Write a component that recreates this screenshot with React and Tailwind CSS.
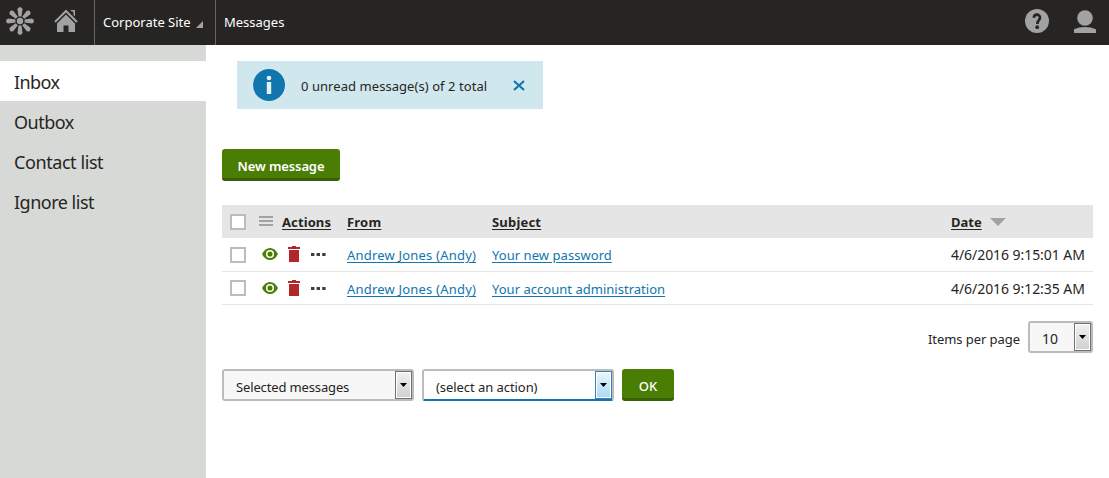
import React from "react";

const messages = [
  { from: "Andrew Jones (Andy)", subject: "Your new password", date: "4/6/2016 9:15:01 AM", height: "h-[34px]", boxPad: "pt-[9px]", spacing: "tracking-[0.05px]" },
  { from: "Andrew Jones (Andy)", subject: "Your account administration", date: "4/6/2016 9:12:35 AM", height: "h-[33px]", boxPad: "pt-[8px]", spacing: "tracking-[0.02px]" },
];

const folders = [
  { name: "Inbox", spacing: "tracking-[-0.6px]" },
  { name: "Outbox", spacing: "tracking-[-0.5px]" },
  { name: "Contact list", spacing: "tracking-[-0.42px]" },
  { name: "Ignore list", spacing: "tracking-[-0.5px]" },
];

function Logo() {
  return (
    <svg width="28" height="28" viewBox="-14 -14 28 28" fill="#a3a2a2">
      {[0, 45, 90, 135, 180, 225, 270, 315].map((a) => (
        <path key={a} transform={`rotate(${a})`} d="M-1.5-4.6L-2.5-11.8Q-2.5-13.3 0-14Q2.5-13.3 2.5-11.8L1.5-4.6Z" />
      ))}
      <circle r="3.2" />
    </svg>
  );
}

function Home() {
  return (
    <svg width="24" height="24" viewBox="0 0 24 24" fill="#a3a2a2">
      <path d="M12 5.6L21 14.5V23H14.5V16.5H9.5V23H3V14.5Z" />
      <path d="M1 13L12 2L23 13" fill="none" stroke="#a3a2a2" strokeWidth="2.1" />
      <path d="M16.2 1H21V7.5L19.4 6V2.6H17.8Z" />
    </svg>
  );
}

function Checkbox() {
  return <span className="block size-4 border-2 border-[#bdbbbb] bg-white" />;
}

function Eye() {
  return (
    <svg width="16" height="12" viewBox="0 0 16 12">
      <path d="M0 6C2 2 4.8 0 8 0S14 2 16 6C14 10 11.2 12 8 12S2 10 0 6Z" fill="#497d04" />
      <circle cx="8" cy="6" r="3.3" fill="none" stroke="#fff" strokeWidth="1.5" />
    </svg>
  );
}

function Trash() {
  return (
    <svg width="12" height="16" viewBox="0 0 12 16" fill="#b12628">
      <path d="M0 1H4V0H8V1H12V3H0ZM1 4H11V16H1Z" />
    </svg>
  );
}

function More() {
  return (
    <svg width="15" height="3" viewBox="0 0 15 3" fill="#403e3d">
      <path d="M0 0H3.4V3H0ZM5.6 0H9V3H5.6ZM11.2 0H14.6V3H11.2Z" />
    </svg>
  );
}

function Select({ label, width, active = false }) {
  return (
    <div
      className={`flex h-8 justify-between rounded-[3px] border-2 ${width} ${
        active ? "border-[#bdbbbb] border-b-[#1175ae] bg-white" : "border-[#bdbbbb] bg-[#f7f7f7]"
      }`}
    >
      <span className="pt-[6px] pl-3 leading-5">{label}</span>
      <span
        className={`flex w-[17px] items-center justify-center border shadow-[inset_0_0_0_1px_white] ${
          active ? "border-[#3c7fb1] bg-linear-to-b from-[#eaf6fd] to-[#a7d9f5]" : "border-[#707070] bg-linear-to-b from-[#f2f2f2] to-[#cfcfcf]"
        }`}
      >
        <svg width="7" height="4" viewBox="0 0 7 4"><path d="M0 0H7L3.5 4Z" /></svg>
      </span>
    </div>
  );
}

export default function App() {
  return (
    <div className="flex h-[478px] w-[1109px] flex-col overflow-hidden bg-white font-['Noto_Sans',sans-serif] text-[13px] text-[#262524]">
      <header className="flex h-[45px] shrink-0 bg-[#262524] text-white">
        <div className="flex w-[95px] border-r border-[#696663] pt-[7px]">
          <span className="ml-[6px]"><Logo /></span>
          <span className="ml-[20px] pt-[2px]"><Home /></span>
        </div>
        <div className="flex w-[121px] border-r border-[#696663] pt-3 pl-2 leading-5">
          <span className="whitespace-nowrap">Corporate Site</span>
          <svg className="mt-[9px] ml-[5px]" width="7" height="7" viewBox="0 0 7 7" fill="#a3a2a2"><path d="M7 0V7H0Z" /></svg>
        </div>
        <div className="pt-3 pl-2 leading-5">Messages</div>
        <div className="ml-auto flex pt-[9px] pr-[13px]">
          <svg width="24" height="24" viewBox="0 0 24 24">
            <circle cx="12" cy="12" r="12" fill="#a3a2a2" />
            <path d="M8.9 8.8C8.9 4.7 15 4.7 15 8.6C15 11.2 12.4 11.3 12.4 15" fill="none" stroke="#262524" strokeWidth="2.7" />
            <circle cx="12.2" cy="18.2" r="1.9" fill="#262524" />
          </svg>
          <svg className="ml-[25px]" width="22" height="24" viewBox="0 0 22 24" fill="#a3a2a2">
            <circle cx="11" cy="9" r="7.8" />
            <path d="M0 24V20.2Q5 18 11 18T22 20.2V24Z" />
          </svg>
        </div>
      </header>
      <div className="flex grow">
        <nav className="w-[206px] shrink-0 bg-[#d6d9d6] pt-4 text-[18px]">
          {folders.map((folder, i) => (
            <div key={folder.name} className={`h-10 pt-[9px] pl-[14px] leading-6 ${folder.spacing} ${i === 0 ? "bg-white" : ""}`}>{folder.name}</div>
          ))}
        </nav>
        <main className="flex grow flex-col pt-4 pr-4 pl-4">
          <div className="ml-[15px] flex h-12 w-[306px] bg-[#d0e7ed] pl-4">
            <svg className="mt-2" width="32" height="32" viewBox="0 0 32 32">
              <circle cx="16" cy="16" r="16" fill="#1175ae" />
              <circle cx="16" cy="9" r="2.3" fill="#e7f1f4" />
              <path d="M13.8 13H18.2V25H13.8Z" fill="#e7f1f4" />
            </svg>
            <span className="w-[228px] pt-[15px] pl-4 leading-5 tracking-[0.06px]">0 unread message(s) of 2 total</span>
            <svg className="mt-[19px]" width="12" height="11" viewBox="0 0 12 11"><path d="M1 1L11 10M11 1L1 10" stroke="#1175ae" strokeWidth="2.2" /></svg>
          </div>
          <button className="mt-10 flex h-8 w-[118px] justify-center rounded-[3px] border-b-[3px] border-[#375f04] bg-[#497d04] pt-[7px] leading-5 font-semibold tracking-[-0.12px] text-white">New message</button>
          <div className="mt-6 flex h-[33px] bg-[#e5e5e5] leading-5 font-bold">
            <div className="w-[37px] pt-[9px] pl-2"><Checkbox /></div>
            <svg className="mt-[11px]" width="14" height="10" viewBox="0 0 14 10" fill="#a3a2a2"><path d="M0 0H14V2H0ZM0 4H14V6H0ZM0 8H14V10H0Z" /></svg>
            <span className="w-[74px] pt-[7px] pl-[9px] tracking-[0.1px] underline underline-offset-2">Actions</span>
            <span className="w-[145px] pt-[7px] tracking-[0.2px] underline underline-offset-2">From</span>
            <span className="w-[459px] pt-[7px] tracking-[0.2px] underline underline-offset-2">Subject</span>
            <span className="pt-[7px] underline underline-offset-2">Date</span>
            <svg className="mt-[13px] ml-[8px]" width="16" height="8" viewBox="0 0 16 8" fill="#a3a2a2"><path d="M0 0H16L8 8Z" /></svg>
          </div>
          {messages.map((m) => (
            <div key={m.subject} className={`flex border-b border-[#e5e5e5] ${m.height} leading-5`}>
              <div className={`w-10 pl-2 ${m.boxPad}`}><Checkbox /></div>
              <div className="flex w-[85px] pt-[8px]">
                <span className="mt-[2px]"><Eye /></span>
                <span className="ml-[10px]"><Trash /></span>
                <span className="mt-[7px] ml-[11px]"><More /></span>
              </div>
              <span className="w-[145px] pt-[7px] tracking-[0.2px] text-[#1175ae] underline underline-offset-2">{m.from}</span>
              <span className={`w-[459px] pt-[7px] ${m.spacing} text-[#1175ae] underline underline-offset-2`}>{m.subject}</span>
              <span className="pt-[7px] text-[14px] tracking-[-0.06px] whitespace-nowrap">{m.date}</span>
            </div>
          ))}
          <div className="mt-4 flex justify-end">
            <span className="pt-2 pr-2 leading-5 tracking-[-0.06px]">Items per page</span>
            <Select label={<span className="text-[14px]">10</span>} width="w-[65px]" />
          </div>
          <div className="mt-4 flex gap-2">
            <Select label={<span className="tracking-[-0.14px]">Selected messages</span>} width="w-48" />
            <Select label={<span className="tracking-[-0.06px]">(select an action)</span>} width="w-48" active />
            <button className="flex h-8 w-[52px] justify-center rounded-[3px] border-b-[3px] border-[#375f04] bg-[#497d04] pt-[7px] leading-5 font-medium text-white">OK</button>
          </div>
        </main>
      </div>
    </div>
  );
}
